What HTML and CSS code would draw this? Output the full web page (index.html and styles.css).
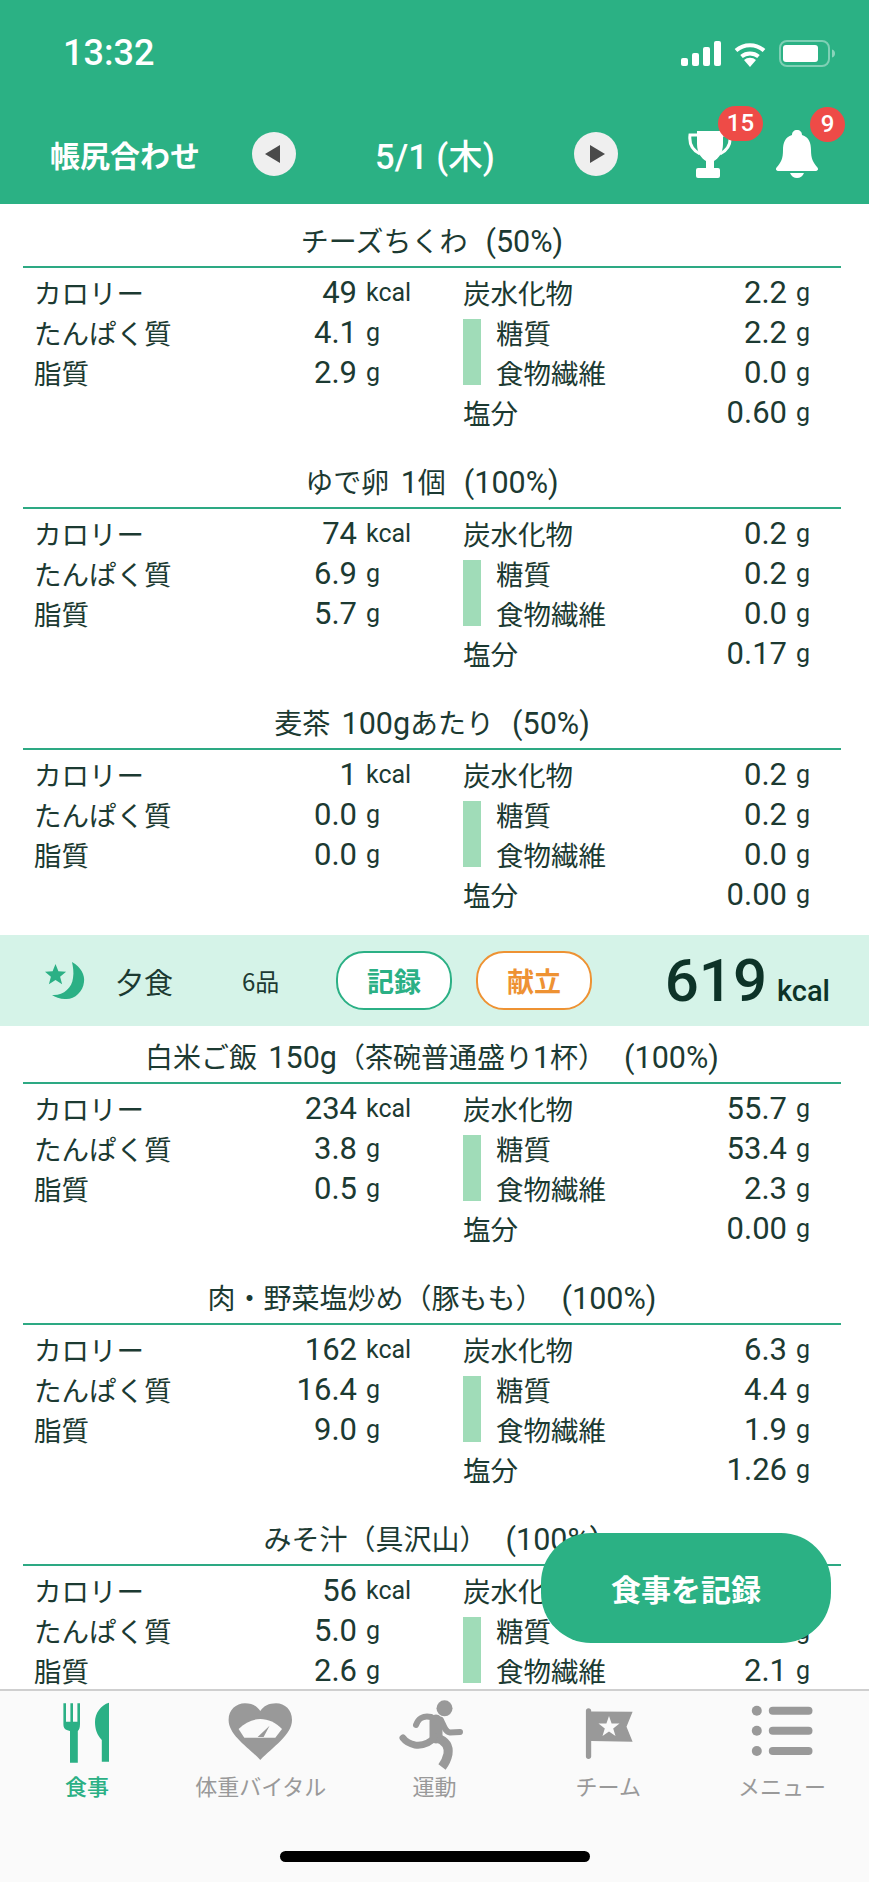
FILE: index.html
```html
<!DOCTYPE html>
<html lang="ja">
<head>
<meta charset="utf-8">
<title>帳尻合わせ</title>
<link rel="stylesheet" href="styles.css">
</head>
<body>
<div class="app">
  <header class="header">
    <div class="status">
      <span class="clock">13:32</span>
      <div class="status-icons">
        <svg class="ic-signal" viewBox="0 0 40 25"><rect x="0" y="17" width="7" height="8" rx="2"/><rect x="11" y="12" width="7" height="13" rx="2"/><rect x="22" y="6" width="7" height="19" rx="2"/><rect x="33" y="0" width="7" height="25" rx="2"/></svg>
        <svg class="ic-wifi" viewBox="0 0 34 26"><path d="M17 26l-6-7a9 9 0 0 1 12 0z"/><path d="M8.500 15.500a13.500 13.500 0 0 1 17 0" fill="none" stroke="#fff" stroke-width="4"/><path d="M3 9.500a21 21 0 0 1 28 0" fill="none" stroke="#fff" stroke-width="4"/></svg>
        <svg class="ic-battery" viewBox="0 0 56 27"><rect x="1" y="1" width="49" height="25" rx="7" fill="none" stroke="#fff" stroke-opacity=".4" stroke-width="2"/><rect x="4" y="5" width="35" height="17" rx="3"/><path d="M53 9.500c2 .5 3 2 3 4s-1 3.500-3 4z" fill-opacity=".45"/></svg>
      </div>
    </div>
    <div class="nav">
      <span class="nav-title">帳尻合わせ</span>
      <button class="round"><span class="tri tri-l"></span></button>
      <span class="nav-date">5/1 (木)</span>
      <button class="round"><span class="tri tri-r"></span></button>
      <div class="bell-wrap trophy">
        <svg viewBox="0 0 46 50" class="ic-trophy"><path d="M10 2h26v13c0 9-5 15-9 17v10h-8V32c-4-2-9-8-9-17z"/><path d="M10 6H3c-1 8 2 15 10 19M36 6h7c1 8-2 15-10 19" fill="none" stroke="#fff" stroke-width="3"/><rect x="9" y="39" width="24" height="10" rx="2"/></svg>
        <span class="badge badge-wide">15</span>
      </div>
      <div class="bell-wrap bell">
        <svg viewBox="0 0 44 48" class="ic-bell"><path d="M22 0c3 0 5 2 5 5 7 2 9 8 9 15 0 9 2 12 6 17 2 2 1 4-2 4H4c-3 0-4-2-2-4 4-5 6-8 6-17 0-7 2-13 9-15 0-3 2-5 5-5z"/><path d="M15 43h14c-1 3-4 5-7 5s-6-2-7-5z"/></svg>
        <span class="badge">9</span>
      </div>
    </div>
  </header>

  <main class="list">
    <section class="food first">
      <h3 class="food-title">チーズちくわ<span class="pct">(50%)</span></h3>
      <div class="nutri">
        <div class="col-l">
          <div class="row"><span class="lb">カロリー</span><span class="num">49</span><span class="un kc">kcal</span></div>
          <div class="row"><span class="lb">たんぱく質</span><span class="num">4.1</span><span class="un">g</span></div>
          <div class="row"><span class="lb">脂質</span><span class="num">2.9</span><span class="un">g</span></div>
        </div>
        <div class="col-r">
          <div class="row"><span class="lb">炭水化物</span><span class="num">2.2</span><span class="un">g</span></div>
          <div class="group"><span class="bar"></span><div class="subs">
            <div class="row"><span class="lb">糖質</span><span class="num">2.2</span><span class="un">g</span></div>
            <div class="row"><span class="lb">食物繊維</span><span class="num">0.0</span><span class="un">g</span></div>
          </div></div>
          <div class="row"><span class="lb">塩分</span><span class="num">0.60</span><span class="un">g</span></div>
        </div>
      </div>
    </section>
    <section class="food">
      <h3 class="food-title">ゆで卵 <span class="lat lat-sp">1</span>個<span class="pct">(100%)</span></h3>
      <div class="nutri">
        <div class="col-l">
          <div class="row"><span class="lb">カロリー</span><span class="num">74</span><span class="un kc">kcal</span></div>
          <div class="row"><span class="lb">たんぱく質</span><span class="num">6.9</span><span class="un">g</span></div>
          <div class="row"><span class="lb">脂質</span><span class="num">5.7</span><span class="un">g</span></div>
        </div>
        <div class="col-r">
          <div class="row"><span class="lb">炭水化物</span><span class="num">0.2</span><span class="un">g</span></div>
          <div class="group"><span class="bar"></span><div class="subs">
            <div class="row"><span class="lb">糖質</span><span class="num">0.2</span><span class="un">g</span></div>
            <div class="row"><span class="lb">食物繊維</span><span class="num">0.0</span><span class="un">g</span></div>
          </div></div>
          <div class="row"><span class="lb">塩分</span><span class="num">0.17</span><span class="un">g</span></div>
        </div>
      </div>
    </section>
    <section class="food">
      <h3 class="food-title">麦茶 <span class="lat lat-sp">100g</span>あたり<span class="pct">(50%)</span></h3>
      <div class="nutri">
        <div class="col-l">
          <div class="row"><span class="lb">カロリー</span><span class="num">1</span><span class="un kc">kcal</span></div>
          <div class="row"><span class="lb">たんぱく質</span><span class="num">0.0</span><span class="un">g</span></div>
          <div class="row"><span class="lb">脂質</span><span class="num">0.0</span><span class="un">g</span></div>
        </div>
        <div class="col-r">
          <div class="row"><span class="lb">炭水化物</span><span class="num">0.2</span><span class="un">g</span></div>
          <div class="group"><span class="bar"></span><div class="subs">
            <div class="row"><span class="lb">糖質</span><span class="num">0.2</span><span class="un">g</span></div>
            <div class="row"><span class="lb">食物繊維</span><span class="num">0.0</span><span class="un">g</span></div>
          </div></div>
          <div class="row"><span class="lb">塩分</span><span class="num">0.00</span><span class="un">g</span></div>
        </div>
      </div>
    </section>

    <div class="meal">
      <svg class="ic-moon" viewBox="0 0 41 40"><path d="M27 1C36 6 40 14 39 21 38 31 29 39 20 38 15 38 10 36 7 34 18 35 27 27 28 17 29 11 28 6 27 1z"/><path d="M10.500 3l2.900 7.300 7.700.4-6 5 2 7.600-6.600-4.300-6.600 4.300 2-7.600-6-5 7.700-.4z"/></svg>
      <span class="meal-name">夕食</span>
      <span class="meal-count">6品</span>
      <button class="pill pill-g">記録</button>
      <button class="pill pill-o">献立</button>
      <span class="meal-total"><span class="meal-kcal">619</span><span class="meal-unit">kcal</span></span>
    </div>

    <section class="food">
      <h3 class="food-title">白米ご飯 <span class="lat lat-sp">150g</span>（茶碗普通盛り<span class="lat">1</span>杯）<span class="pct">(100%)</span></h3>
      <div class="nutri">
        <div class="col-l">
          <div class="row"><span class="lb">カロリー</span><span class="num">234</span><span class="un kc">kcal</span></div>
          <div class="row"><span class="lb">たんぱく質</span><span class="num">3.8</span><span class="un">g</span></div>
          <div class="row"><span class="lb">脂質</span><span class="num">0.5</span><span class="un">g</span></div>
        </div>
        <div class="col-r">
          <div class="row"><span class="lb">炭水化物</span><span class="num">55.7</span><span class="un">g</span></div>
          <div class="group"><span class="bar"></span><div class="subs">
            <div class="row"><span class="lb">糖質</span><span class="num">53.4</span><span class="un">g</span></div>
            <div class="row"><span class="lb">食物繊維</span><span class="num">2.3</span><span class="un">g</span></div>
          </div></div>
          <div class="row"><span class="lb">塩分</span><span class="num">0.00</span><span class="un">g</span></div>
        </div>
      </div>
    </section>
    <section class="food">
      <h3 class="food-title">肉・野菜塩炒め（豚もも）<span class="pct">(100%)</span></h3>
      <div class="nutri">
        <div class="col-l">
          <div class="row"><span class="lb">カロリー</span><span class="num">162</span><span class="un kc">kcal</span></div>
          <div class="row"><span class="lb">たんぱく質</span><span class="num">16.4</span><span class="un">g</span></div>
          <div class="row"><span class="lb">脂質</span><span class="num">9.0</span><span class="un">g</span></div>
        </div>
        <div class="col-r">
          <div class="row"><span class="lb">炭水化物</span><span class="num">6.3</span><span class="un">g</span></div>
          <div class="group"><span class="bar"></span><div class="subs">
            <div class="row"><span class="lb">糖質</span><span class="num">4.4</span><span class="un">g</span></div>
            <div class="row"><span class="lb">食物繊維</span><span class="num">1.9</span><span class="un">g</span></div>
          </div></div>
          <div class="row"><span class="lb">塩分</span><span class="num">1.26</span><span class="un">g</span></div>
        </div>
      </div>
    </section>
    <section class="food">
      <h3 class="food-title">みそ汁（具沢山）<span class="pct">(100%)</span></h3>
      <div class="nutri">
        <div class="col-l">
          <div class="row"><span class="lb">カロリー</span><span class="num">56</span><span class="un kc">kcal</span></div>
          <div class="row"><span class="lb">たんぱく質</span><span class="num">5.0</span><span class="un">g</span></div>
          <div class="row"><span class="lb">脂質</span><span class="num">2.6</span><span class="un">g</span></div>
        </div>
        <div class="col-r">
          <div class="row"><span class="lb">炭水化物</span><span class="num">8.5</span><span class="un">g</span></div>
          <div class="group"><span class="bar"></span><div class="subs">
            <div class="row"><span class="lb">糖質</span><span class="num">6.4</span><span class="un">g</span></div>
            <div class="row"><span class="lb">食物繊維</span><span class="num">2.1</span><span class="un">g</span></div>
          </div></div>
          <div class="row"><span class="lb">塩分</span><span class="num">1.20</span><span class="un">g</span></div>
        </div>
      </div>
    </section>
  </main>

  <button class="fab">食事を記録</button>

  <nav class="tabbar">
    <div class="tabs">
      <div class="tab active">
        <svg class="tab-ic" viewBox="0 0 70 70"><path d="M11.400 3.300H14V21.700H18.400V3.300H21V21.700H25.400V3.300H28V24C28 28 27 30 25.800 31V62.700H18V31C13 30 11.400 28 11.400 24z"/><path d="M57 2.700V61.700H49.800V40C45 35 43 29 43 22 43 13 49 5 57 2.700z"/></svg>
        <span class="tab-lb">食事</span>
      </div>
      <div class="tab">
        <svg class="tab-ic" viewBox="0 0 70 70"><path d="M34.300 60C22 47 2.600 35 2.600 20 2.600 10 10 3.300 19 3.300 26 3.300 31 6 34.300 11 37.600 6 43 3.300 50 3.300 59 3.300 66 10 66 20 66 35 46.600 47 34.300 60z"/><path d="M12.600 29C19 22.500 27 19 34.300 19 42 19 50 22.500 56 29L49.300 37.700H18.300z" fill="#fafafa"/><path d="M43.600 25.700L31.600 37H37.600z"/></svg>
        <span class="tab-lb">体重バイタル</span>
      </div>
      <div class="tab">
        <svg class="tab-ic" viewBox="0 0 70 70"><circle cx="45.500" cy="8.300" r="8"/><path d="M17 25C19 19 24 15 32 17" class="limb limb-6"/><path d="M42 20C45 26 46 32 51 32.500L61 32" class="limb limb-6"/><path d="M37 21L37 37" class="limb limb-13"/><path d="M36 37C30 44 24 46 16 45 11 44 7 42 4 38" class="limb limb-7"/><path d="M38 38C47 41 50 47 49 54 48 59 46 63 43 67" class="limb limb-9"/></svg>
        <span class="tab-lb">運動</span>
      </div>
      <div class="tab">
        <svg class="tab-ic" viewBox="0 0 70 70"><path d="M15.500 8.300c1.500 0 2.700 1 2.700 2.500v.700L59.600 11.700 53.500 26.700 59.600 41.700 18.200 41V56.500c0 1.500-1.200 2.500-2.700 2.500s-2.600-1-2.600-2.500V10.800c0-1.500 1.100-2.500 2.600-2.500z"/><path d="M36 16L38.600 23.400 46.500 23.600 40.200 28.400 42.500 36 36 31.500 29.500 36 31.800 28.400 25.500 23.600 33.400 23.400z" fill="#fafafa"/></svg>
        <span class="tab-lb">チーム</span>
      </div>
      <div class="tab">
        <svg class="tab-ic" viewBox="0 0 70 70"><circle cx="9.800" cy="10.700" r="5"/><circle cx="9.800" cy="30.700" r="5"/><circle cx="9.800" cy="51" r="5"/><rect x="21.800" y="6.700" width="43.700" height="8" rx="4"/><rect x="21.800" y="26.700" width="43.700" height="8" rx="4"/><rect x="21.800" y="47" width="43.700" height="8" rx="4"/></svg>
        <span class="tab-lb">メニュー</span>
      </div>
    </div>
    <span class="home"></span>
  </nav>
</div>
</body>
</html>
```

FILE: styles.css
```css
* { box-sizing: border-box; }
html, body { margin: 0; padding: 0; }
body { background: #fff; font-family: "Noto Sans CJK JP", "Noto Sans", sans-serif; color: #1c3a32; }
.app { position: relative; width: 869px; height: 1882px; display: flex; flex-direction: column; overflow: hidden; }

/* header */
.header { flex: none; height: 204px; background: #2bb184; color: #fff; padding: 40px 34px 0 50px; }
.status { display: flex; justify-content: space-between; align-items: center; height: 27px; padding-left: 13px; }
.clock { font-family: Roboto, sans-serif; font-size: 36px; font-weight: 500; line-height: 27px; }
.status-icons { display: flex; align-items: center; gap: 12px; fill: #fff; }
.ic-signal { width: 40px; height: 25px; }
.ic-wifi { width: 34px; height: 26px; }
.ic-battery { width: 56px; height: 27px; }
.nav { display: flex; align-items: center; height: 60px; margin-top: 57px; }
.nav-title { font-size: 30px; font-weight: 700; width: 202px; }
.round { width: 44px; height: 44px; border-radius: 50%; border: 0; background: #efefef; padding: 0; display: flex; align-items: center; justify-content: center; flex: none; }
.tri { width: 0; height: 0; border-top: 9px solid transparent; border-bottom: 9px solid transparent; }
.tri-l { border-right: 15px solid #4a4a4a; margin-left: -3px; }
.tri-r { border-left: 15px solid #4a4a4a; margin-left: 3px; }
.nav-date { font-family: Roboto, "Noto Sans CJK JP", sans-serif; font-size: 34.500px; font-weight: 500; width: 278px; text-align: center; white-space: nowrap; }
.bell-wrap { position: relative; flex: none; fill: #fff; }
.trophy { margin-left: 69px; width: 46px; height: 50px; }
.bell { margin-left: 42px; width: 44px; height: 48px; }
.ic-trophy { width: 46px; height: 50px; display: block; }
.ic-bell { width: 44px; height: 48px; display: block; }
.badge { position: absolute; top: -23px; left: 35px; width: 35px; height: 35px; border-radius: 18px; background: #ee4b47; color: #fff; font-family: Roboto, sans-serif; font-size: 24px; font-weight: 500; line-height: 35px; text-align: center; }
.badge-wide { left: 31px; width: 45px; }

/* food list */
.list { flex: 1; min-height: 0; overflow: hidden; padding-top: 6px; }
.food { height: 241px; padding: 8px 28px 0 23px; }
.food-title { margin: 0; height: 50px; border-bottom: 2px solid #2da983; font-size: 28px; font-weight: 400; line-height: 44px; text-align: center; white-space: nowrap; }
.lat { font-family: Roboto, sans-serif; font-size: 30.500px; font-weight: 400; }
.lat-sp { margin-left: 5px; }
.pct { font-family: Roboto, sans-serif; font-size: 30.500px; font-weight: 400; margin-left: 18px; }
.nutri { display: flex; padding: 4px 0 0 11px; }
.col-l { width: 377px; }
.col-r { width: 346px; margin-left: 52px; }
.row { display: flex; align-items: center; height: 40px; font-size: 27.500px; }
.lb { flex: 1; white-space: nowrap; }
.num { font-family: Roboto, sans-serif; font-size: 31px; font-weight: 400; text-align: right; }
.un { font-family: Roboto, sans-serif; font-size: 25px; font-weight: 400; margin-left: 9px; width: 13px; }
.col-l .un { width: 45px; }
.col-l .kc { font-size: 25px; white-space: nowrap; }
.group { display: flex; align-items: center; }
.bar { width: 18px; height: 66px; background: #a0dcb8; margin-right: 15px; flex: none; }
.subs { flex: 1; }

/* meal band */
.meal { display: flex; align-items: center; height: 91px; margin-top: 2px; background: #d5f3e8; padding: 0 39px 0 45px; }
.ic-moon { width: 41px; height: 40px; fill: #2bb085; flex: none; }
.meal-name { font-size: 29px; margin-left: 29px; width: 127px; }
.meal-count { font-size: 24px; width: 94px; }
.pill { width: 116px; height: 59px; border-radius: 28px; background: #fff; border: 2px solid #2bb085; color: #2bb085; font-family: inherit; font-size: 27px; font-weight: 700; padding: 0; flex: none; }
.pill-o { border-color: #ee9233; color: #ee9233; margin-left: 24px; }
.meal-total { margin-left: auto; display: flex; align-items: baseline; gap: 10px; color: #0d3328; }
.meal-kcal { font-family: Roboto, sans-serif; font-size: 60px; font-weight: 500; line-height: 1; }
.meal-unit { font-family: Roboto, sans-serif; font-size: 29px; font-weight: 500; }

/* floating button */
.fab { position: absolute; left: 541px; top: 1533px; width: 290px; height: 110px; border: 0; border-radius: 50px; background: #2bb184; color: #fff; font-family: inherit; font-size: 30px; font-weight: 700; padding: 0; }

/* tab bar */
.tabbar { flex: none; height: 193px; background: #fafafa; border-top: 2px solid #cfcfcf; display: flex; flex-direction: column; align-items: center; }
.tabs { display: flex; width: 100%; }
.tab { width: 173.800px; display: flex; flex-direction: column; align-items: center; color: #999; fill: #999; padding-top: 9px; }
.tab-ic { width: 70px; height: 70px; display: block; }
.tab-lb { font-size: 22px; line-height: 30px; white-space: nowrap; }
.active { color: #2bb085; fill: #2bb085; }
.active .tab-lb { font-weight: 500; }
.limb { fill: none; stroke: #999; stroke-linejoin: round; stroke-linecap: round; }
.limb-6 { stroke-width: 6; }
.limb-7 { stroke-width: 7; }
.limb-9 { stroke-width: 9; stroke-linecap: butt; }
.limb-13 { stroke-width: 13; }
.home { width: 310px; height: 11px; border-radius: 6px; background: #000; margin-top: 51px; }
```
